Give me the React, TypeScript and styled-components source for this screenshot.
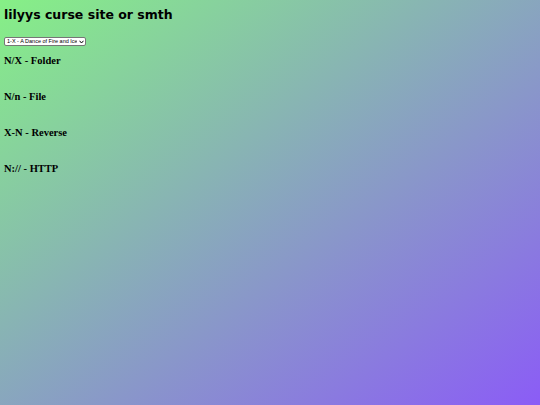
import styled, { createGlobalStyle } from "styled-components";

const GlobalStyle = createGlobalStyle`
  html, body {
    margin: 0;
    padding: 0;
  }
  body {
    min-height: 405px;
    background: linear-gradient(to bottom right, #86f086 0%, #8b5cf6 100%);
    font-family: "Liberation Serif", serif;
  }
`;

const Page = styled.div`
  padding: 4px;
  display: flex;
  flex-direction: column;
  align-items: flex-start;
`;

const Title = styled.h1`
  font-family: "Comic Sans MS", "DejaVu Sans", sans-serif;
  font-size: 12.5px;
  font-weight: bold;
  margin: 3px 0 15px;
  color: #000;
`;

const PickerWrap = styled.span`
  position: relative;
  display: inline-block;
  margin: 0 0 6px;
`;

const Picker = styled.select`
  appearance: none;
  -webkit-appearance: none;
  display: block;
  font-family: "Liberation Sans", Arial, sans-serif;
  font-size: 5.5px;
  color: #000;
  background: #fff;
  border: 1px solid #767676;
  border-radius: 2px;
  width: 82px;
  height: 9px;
  padding: 0 8px 0 2px;
  margin: 0;
  line-height: 7px;
`;

const Chevron = styled.svg`
  position: absolute;
  right: 2px;
  top: 2.5px;
  width: 5px;
  height: 4px;
  pointer-events: none;
`;

const Code = styled.h3`
  font-family: "Liberation Serif", serif;
  font-size: 10.5px;
  font-weight: bold;
  margin: 3px 0 21px;
  line-height: 12px;
`;

const codes = ["N/X - Folder", "N/n - File", "X-N - Reverse", "N:// - HTTP"];

export default function App() {
  return (
    <>
      <GlobalStyle />
      <Page>
        <Title>lilyys curse site or smth</Title>
        <PickerWrap>
          <Picker defaultValue="1">
            <option value="1">1-X - A Dance of Fire and Ice</option>
          </Picker>
          <Chevron viewBox="0 0 10 8">
            <path d="M1 1.5 L5 6 L9 1.5" fill="none" stroke="#000" strokeWidth="2" />
          </Chevron>
        </PickerWrap>
        {codes.map((c) => (
          <Code key={c}>{c}</Code>
        ))}
      </Page>
    </>
  );
}
